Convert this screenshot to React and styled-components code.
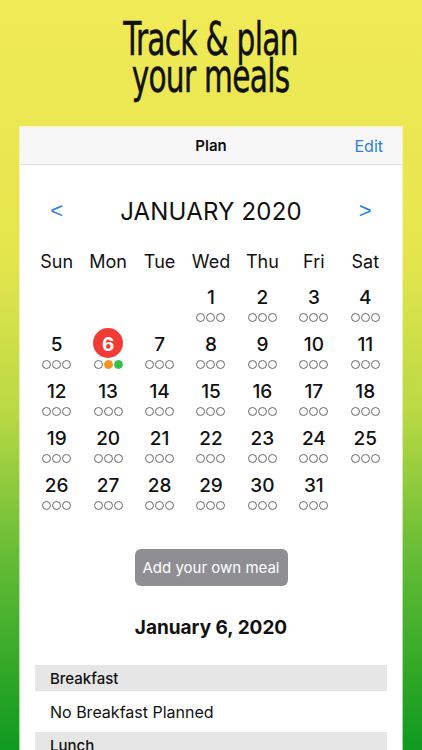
import React from "react";
import styled, { createGlobalStyle } from "styled-components";

const Global = createGlobalStyle`
  html, body {
    margin: 0;
    padding: 0;
  }
  body {
    width: 422px;
    height: 750px;
    overflow: hidden;
    font-family: Inter, "Liberation Sans", sans-serif;
  }
`;

const Page = styled.div`
  width: 422px;
  height: 750px;
  overflow: hidden;
  background: linear-gradient(180deg, #f0ea57 0%, #e4e54d 35%, #b9d944 55%, #62bb34 75%, #0f9a1f 100%);
  display: flex;
  flex-direction: column;
  align-items: center;
`;

const Headline = styled.h1`
  flex-shrink: 0;
  margin: 0;
  padding-top: 20px;
  height: 127px;
  box-sizing: border-box;
  font-family: "DejaVu Sans Condensed", "Liberation Sans Narrow", sans-serif;
  font-weight: 400;
  font-size: 47px;
  line-height: 37px;
  letter-spacing: -1px;
  color: #111;
  -webkit-text-stroke: 0.5px #111;
  text-align: center;
  transform: scaleX(0.7);
`;

const Screen = styled.div`
  width: 382px;
  flex: 1;
  min-height: 0;
  overflow: hidden;
  background: #fff;
  box-shadow: 0 0 0 1px rgba(255, 255, 255, 0.6);
`;

const NavBar = styled.div`
  height: 38px;
  background: #f7f7f7;
  border-bottom: 1px solid #dedede;
  box-sizing: border-box;
  display: grid;
  grid-template-columns: 1fr auto 1fr;
  align-items: center;
  padding: 0 19px;
`;

const NavTitle = styled.div`
  font-size: 15px;
  font-weight: 600;
  color: #111;
`;

const NavAction = styled.div`
  justify-self: end;
  font-size: 16px;
  color: #2a7fdb;
`;

const Calendar = styled.div`
  padding: 26px 11px 0;
`;

const MonthRow = styled.div`
  height: 40px;
  display: grid;
  grid-template-columns: repeat(7, 1fr);
  align-items: center;
`;

const Arrow = styled.div`
  text-align: center;
  font-size: 22px;
  color: #2a7fdb;
  font-family: "Liberation Sans", sans-serif;
  grid-column: ${(p) => p.$col};
`;

const MonthTitle = styled.div`
  grid-column: 2 / 7;
  text-align: center;
  font-size: 24px;
  color: #111;
  letter-spacing: 0.2px;
`;

const Grid = styled.div`
  display: grid;
  grid-template-columns: repeat(7, 1fr);
`;

const WeekDay = styled.div`
  height: 30px;
  margin-top: 16px;
  margin-bottom: 8px;
  line-height: 30px;
  text-align: center;
  font-size: 18px;
  color: #111;
`;

const Cell = styled.div`
  height: 47px;
  display: flex;
  flex-direction: column;
  align-items: center;
`;

const DayNum = styled.div`
  height: 24px;
  min-width: 30px;
  display: flex;
  align-items: center;
  justify-content: center;
  font-size: 19px;
  font-weight: 500;
  color: #111;
  position: relative;
  z-index: 0;

  ${(p) =>
    p.$selected &&
    `
    color: #fff;
    font-weight: 700;
    &::before {
      content: "";
      position: absolute;
      left: 0;
      top: -4px;
      width: 30px;
      height: 30px;
      border-radius: 50%;
      background: #f03b36;
      z-index: -1;
    }
  `}
`;

const Dots = styled.div`
  margin-top: 4px;
  display: flex;
  gap: 1px;
`;

const Dot = styled.span`
  width: 9px;
  height: 9px;
  box-sizing: border-box;
  border-radius: 50%;
  border: 1px solid ${(p) => p.$fill || "#6a6a6a"};
  background: ${(p) => p.$fill || "transparent"};
`;

const ButtonRow = styled.div`
  display: flex;
  justify-content: center;
  padding-top: 29px;
`;

const GrayButton = styled.button`
  width: 153px;
  height: 37px;
  border: none;
  border-radius: 6px;
  background: #8e8e93;
  color: #fff;
  font-family: Inter, "Liberation Sans", sans-serif;
  font-size: 15px;
  padding: 0;
`;

const DateTitle = styled.div`
  margin-top: 30px;
  height: 24px;
  line-height: 24px;
  text-align: center;
  font-size: 19px;
  font-weight: 700;
  color: #111;
`;

const Meals = styled.div`
  padding: 25px 15px 0;
`;

const MealHeader = styled.div`
  height: 26px;
  background: #e6e6e6;
  padding-left: 15px;
  display: flex;
  align-items: center;
  font-size: 15px;
  font-weight: 500;
  color: #111;
`;

const MealRow = styled.div`
  height: 41px;
  padding-left: 15px;
  display: flex;
  align-items: center;
  font-size: 16px;
  color: #111;
`;

const weekDays = ["Sun", "Mon", "Tue", "Wed", "Thu", "Fri", "Sat"];

function DayCell({ day }) {
  if (!day) return <Cell />;
  const selected = day === 6;
  return (
    <Cell>
      <DayNum $selected={selected}>{day}</DayNum>
      <Dots>
        <Dot />
        <Dot $fill={selected ? "#f7941d" : null} />
        <Dot $fill={selected ? "#34c24a" : null} />
      </Dots>
    </Cell>
  );
}

export default function App() {
  // January 2020 starts on a Wednesday
  const cells = [null, null, null];
  for (let d = 1; d <= 31; d++) cells.push(d);

  return (
    <Page>
      <Global />
      <Headline>
        Track &amp; plan
        <br />
        your meals
      </Headline>
      <Screen>
        <NavBar>
          <div />
          <NavTitle>Plan</NavTitle>
          <NavAction>Edit</NavAction>
        </NavBar>
        <Calendar>
          <MonthRow>
            <Arrow $col={1}>&lt;</Arrow>
            <MonthTitle>JANUARY 2020</MonthTitle>
            <Arrow $col={7}>&gt;</Arrow>
          </MonthRow>
          <Grid>
            {weekDays.map((w) => (
              <WeekDay key={w}>{w}</WeekDay>
            ))}
            {cells.map((d, i) => (
              <DayCell key={i} day={d} />
            ))}
          </Grid>
        </Calendar>
        <ButtonRow>
          <GrayButton>Add your own meal</GrayButton>
        </ButtonRow>
        <DateTitle>January 6, 2020</DateTitle>
        <Meals>
          <MealHeader>Breakfast</MealHeader>
          <MealRow>No Breakfast Planned</MealRow>
          <MealHeader>Lunch</MealHeader>
          <MealRow>No Lunch Planned</MealRow>
        </Meals>
      </Screen>
    </Page>
  );
}
